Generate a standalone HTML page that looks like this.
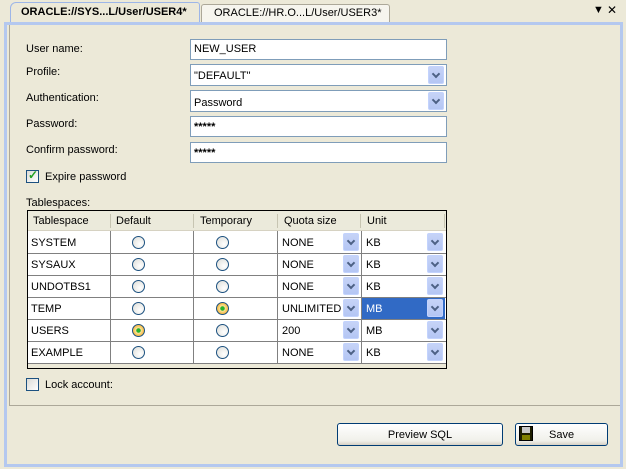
<!DOCTYPE html>
<html><head><style>
*{margin:0;padding:0;box-sizing:border-box}
body{width:626px;height:469px;background:#ece9d8;font-family:"Liberation Sans",sans-serif;font-size:11px;color:#000;position:relative;overflow:hidden}
.a{position:absolute}
.lbl{position:absolute;left:26px}
.inp{position:absolute;left:190px;width:257px;height:21px;background:#fff;border:1px solid #7f9db9;padding:3px 0 0 3px}
.dd{position:absolute;width:16px;height:18px;background:linear-gradient(#c6d3f7,#b4c6f4);border:1px solid #c3d3fd;border-radius:2px}
.dd::after{content:"";position:absolute;left:4px;top:4px;width:4px;height:4px;border-right:2px solid #4d6185;border-bottom:2px solid #4d6185;transform:rotate(45deg)}
.cb{position:absolute;width:13px;height:13px;border:1px solid #1c5180;background:linear-gradient(135deg,#dcdcd7,#fff)}
.rad{position:absolute;width:13px;height:13px;border-radius:50%;border:1px solid #1c5180;background:radial-gradient(circle at 65% 65%,#fff,#dcdcd6)}
.rad.on{border-color:#1c5180;background:radial-gradient(circle,#29b32c 0 2px,#fbe49b 2.5px,#f5b233 6px)}
.cell{position:absolute;height:22px;padding:6px 0 0 3px}
</style></head><body>
<div class="a" style="left:10px;top:2px;width:190px;height:21px;background:#ece9d8;border:1px solid #9db6e8;border-bottom:none;border-radius:6px 3px 0 0;font-weight:bold;padding:3px 0 0 10px">ORACLE://SYS...L/User/USER4*</div>
<div class="a" style="left:201px;top:4px;width:189px;height:18px;background:#f6f5ee;border:1px solid #aca899;border-bottom:none;border-radius:3px 3px 0 0;padding:2px 0 0 12px">ORACLE://HR.O...L/User/USER3*</div>
<div class="a" style="left:593px;top:4px;font-size:11px;font-weight:bold">▼</div>
<div class="a" style="left:607px;top:3px;font-size:12px">✕</div>
<div class="a" style="left:4px;top:22px;width:619px;height:445px;border:3px solid #b4c8ef"></div>
<div class="a" style="left:9px;top:25px;width:611px;height:381px;border-left:1px solid #aca899;border-bottom:1px solid #aca899"></div>

<div class="lbl" style="top:43px">User name:</div>
<div class="inp" style="top:39px">NEW_USER</div>
<div class="lbl" style="top:66px">Profile:</div>
<div class="inp" style="top:64px;height:22px;padding-top:5px">"DEFAULT"</div><div class="dd" style="left:428px;top:66px"></div>
<div class="lbl" style="top:92px">Authentication:</div>
<div class="inp" style="top:90px;height:22px;padding-top:6px">Password</div><div class="dd" style="left:428px;top:92px"></div>
<div class="lbl" style="top:118px">Password:</div>
<div class="inp" style="top:116px;font-weight:bold;padding-top:4px">*****</div>
<div class="lbl" style="top:144px">Confirm password:</div>
<div class="inp" style="top:142px;font-weight:bold;padding-top:4px">*****</div>

<div class="cb" style="left:26px;top:170px"><span style="position:absolute;left:1px;top:-3px;color:#21a121;font-size:12px;font-weight:bold">✓</span></div>
<div class="a" style="left:45px;top:171px">Expire password</div>
<div class="a" style="left:26px;top:197px">Tablespaces:</div>

<div class="a" style="left:27px;top:210px;width:420px;height:159px;border:1px solid #000;background:#ece9d8"></div>
<div class="a" style="left:28px;top:211px;width:418px;height:20px;background:#ebeadb;border-bottom:1px solid #d6d2c2"></div>
<div class="a" style="left:33px;top:215px">Tablespace</div>
<div class="a" style="left:116px;top:215px">Default</div>
<div class="a" style="left:200px;top:215px">Temporary</div>
<div class="a" style="left:284px;top:215px">Quota size</div>
<div class="a" style="left:367px;top:215px">Unit</div>
<div class="a" style="left:110px;top:214px;width:1px;height:14px;background:#c7c5b2"></div>
<div class="a" style="left:193px;top:214px;width:1px;height:14px;background:#c7c5b2"></div>
<div class="a" style="left:277px;top:214px;width:1px;height:14px;background:#c7c5b2"></div>
<div class="a" style="left:360px;top:214px;width:1px;height:14px;background:#c7c5b2"></div>
<div class="a" style="left:444px;top:214px;width:1px;height:14px;background:#c7c5b2"></div>
<div class="a" style="left:28px;top:231px;width:418px;height:133px;background:#fff"></div>
<div class="a" style="left:28px;top:363px;width:418px;height:1px;background:#808080"></div>
<div class="a" style="left:28px;top:253px;width:418px;height:1px;background:#808080"></div>
<div class="a" style="left:28px;top:275px;width:418px;height:1px;background:#808080"></div>
<div class="a" style="left:28px;top:297px;width:418px;height:1px;background:#808080"></div>
<div class="a" style="left:28px;top:319px;width:418px;height:1px;background:#808080"></div>
<div class="a" style="left:28px;top:341px;width:418px;height:1px;background:#808080"></div>
<div class="a" style="left:110px;top:231px;width:1px;height:132px;background:#808080"></div>
<div class="a" style="left:193px;top:231px;width:1px;height:132px;background:#808080"></div>
<div class="a" style="left:277px;top:231px;width:1px;height:132px;background:#808080"></div>
<div class="a" style="left:361px;top:231px;width:1px;height:132px;background:#808080"></div>
<div class="a" style="left:362px;top:298px;width:83px;height:21px;background:#316ac5"></div>

<div class="cell" style="left:28px;top:231px">SYSTEM</div>
<div class="cell" style="left:28px;top:253px">SYSAUX</div>
<div class="cell" style="left:28px;top:275px">UNDOTBS1</div>
<div class="cell" style="left:28px;top:297px">TEMP</div>
<div class="cell" style="left:28px;top:319px">USERS</div>
<div class="cell" style="left:28px;top:341px">EXAMPLE</div>

<div class="rad" style="left:132px;top:236px"></div><div class="rad" style="left:216px;top:236px"></div>
<div class="rad" style="left:132px;top:258px"></div><div class="rad" style="left:216px;top:258px"></div>
<div class="rad" style="left:132px;top:280px"></div><div class="rad" style="left:216px;top:280px"></div>
<div class="rad" style="left:132px;top:302px"></div><div class="rad on" style="left:216px;top:302px"></div>
<div class="rad on" style="left:132px;top:324px"></div><div class="rad" style="left:216px;top:324px"></div>
<div class="rad" style="left:132px;top:346px"></div><div class="rad" style="left:216px;top:346px"></div>

<div class="cell" style="left:279px;top:231px">NONE</div><div class="dd" style="left:343px;top:233px"></div>
<div class="cell" style="left:279px;top:253px">NONE</div><div class="dd" style="left:343px;top:255px"></div>
<div class="cell" style="left:279px;top:275px">NONE</div><div class="dd" style="left:343px;top:277px"></div>
<div class="cell" style="left:279px;top:297px">UNLIMITED</div><div class="dd" style="left:343px;top:299px"></div>
<div class="cell" style="left:279px;top:319px">200</div><div class="dd" style="left:343px;top:321px"></div>
<div class="cell" style="left:279px;top:341px">NONE</div><div class="dd" style="left:343px;top:343px"></div>

<div class="cell" style="left:363px;top:231px">KB</div><div class="dd" style="left:427px;top:233px"></div>
<div class="cell" style="left:363px;top:253px">KB</div><div class="dd" style="left:427px;top:255px"></div>
<div class="cell" style="left:363px;top:275px">KB</div><div class="dd" style="left:427px;top:277px"></div>
<div class="cell" style="left:363px;top:297px;color:#fff">MB</div><div class="dd" style="left:427px;top:299px"></div>
<div class="cell" style="left:363px;top:319px">MB</div><div class="dd" style="left:427px;top:321px"></div>
<div class="cell" style="left:363px;top:341px">KB</div><div class="dd" style="left:427px;top:343px"></div>

<div class="cb" style="left:26px;top:378px"></div>
<div class="a" style="left:45px;top:379px">Lock account:</div>

<div class="a" style="left:337px;top:423px;width:166px;height:23px;border:1px solid #003c74;border-radius:3px;background:linear-gradient(#fff,#f0f0ea 80%,#d6d0c5);text-align:center;padding-top:5px">Preview SQL</div>
<div class="a" style="left:515px;top:423px;width:93px;height:23px;border:1px solid #003c74;border-radius:3px;background:linear-gradient(#fff,#f0f0ea 80%,#d6d0c5);padding:5px 0 0 33px">Save</div>
<div class="a" style="left:519px;top:426px;width:14px;height:15px;background:#1e1e00;border:1px solid #000">
<div class="a" style="left:2px;top:0;width:8px;height:6px;background:#c8c8c8"></div>
<div class="a" style="left:2px;top:8px;width:8px;height:5px;background:#808000"></div></div>
</body></html>
